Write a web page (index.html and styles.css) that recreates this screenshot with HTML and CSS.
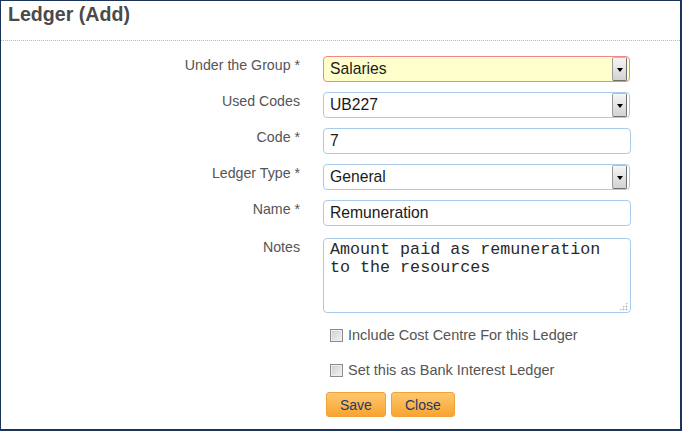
FILE: index.html
```html
<!DOCTYPE html>
<html>
<head>
<meta charset="utf-8">
<title>Ledger (Add)</title>
<link rel="stylesheet" href="styles.css">
</head>
<body>
<div class="frame">
  <header class="head">
    <h1 class="title">Ledger (Add)</h1>
  </header>
  <form class="form">
    <label class="lbl">Under the Group *</label>
    <div class="select invalid"><span class="val">Salaries</span><span class="arrow"></span></div>

    <label class="lbl">Used Codes</label>
    <div class="select"><span class="val">UB227</span><span class="arrow"></span></div>

    <label class="lbl">Code *</label>
    <div class="input"><span class="val">7</span></div>

    <label class="lbl">Ledger Type *</label>
    <div class="select"><span class="val">General</span><span class="arrow"></span></div>

    <label class="lbl">Name *</label>
    <div class="input"><span class="val">Remuneration</span></div>

    <label class="lbl notes-lbl">Notes</label>
    <div class="textarea"><span class="mono">Amount paid as remuneration<br>to the resources</span><span class="grip"></span></div>

    <div class="check first"><span class="box"></span><span>Include Cost Centre For this Ledger</span></div>
    <div class="check"><span class="box"></span><span>Set this as Bank Interest Ledger</span></div>

    <div class="buttons">
      <span class="btn">Save</span>
      <span class="btn">Close</span>
    </div>
  </form>
</div>
</body>
</html>
```

FILE: styles.css
```css
html, body {
  margin: 0;
  padding: 0;
  background: #fff;
}
.frame {
  width: 682px;
  height: 431px;
  box-sizing: border-box;
  border-style: solid;
  border-color: #1b3459;
  border-width: 1px 2px 2px 1px;
  font-family: "Liberation Sans", Arial, sans-serif;
  background: #fff;
}
.head {
  box-sizing: border-box;
  height: 40px;
  border-bottom: 1px dotted #b5b5b5;
}
.title {
  margin: 0;
  padding: 2px 0 0 7px;
  font-size: 19.6px;
  font-weight: bold;
  color: #4a4a4a;
  line-height: 22px;
}
.form {
  display: grid;
  grid-template-columns: 299px 308px;
  column-gap: 23px;
  row-gap: 10px;
  padding-top: 15px;
  margin: 0;
}
.lbl {
  text-align: right;
  font-size: 14.2px;
  line-height: 16px;
  padding-top: 1px;
  color: #555;
}
.select, .input, .textarea {
  box-sizing: border-box;
  border: 1px solid #a9cbea;
  border-radius: 4px;
  background: #fff;
  font-size: 15.7px;
  color: #1a1a1a;
}
.select {
  width: 307px;
  height: 26px;
  display: flex;
  align-items: center;
  padding-left: 6px;
}
.select.invalid {
  border-color: #f0868a;
  background: #ffffcc;
}
.input {
  height: 26px;
  display: flex;
  align-items: center;
  padding-left: 6px;
}
.val {
  flex: 1;
  line-height: 18px;
}
.arrow {
  width: 15px;
  height: 24px;
  box-sizing: border-box;
  margin-right: 2px;
  border: 1px solid #6f6f6f;
  border-top-color: #bdbdbd;
  border-left-color: #9a9a9a;
  border-radius: 2px;
  background: linear-gradient(#f6f6f6, #d2d2d2);
  display: flex;
  align-items: center;
  justify-content: center;
}
.arrow::after {
  content: "";
  width: 0;
  height: 0;
  border-left: 3.5px solid transparent;
  border-right: 3.5px solid transparent;
  border-top: 4px solid #000;
  margin-top: 1px;
}
.notes-lbl, .textarea {
  margin-top: 2px;
}
.textarea {
  height: 75px;
  padding: 2px 6px;
  display: flex;
  align-items: flex-start;
}
.mono {
  font-family: "Liberation Mono", "Courier New", monospace;
  font-size: 16.7px;
  line-height: 18px;
  color: #2a2a2a;
  flex: 1;
}
.grip {
  align-self: flex-end;
  width: 9px;
  height: 9px;
  margin: 0 -4px -1px 0;
  background:
    radial-gradient(circle, #bbb 0.9px, transparent 1.1px) 0 0 / 3px 3px;
  -webkit-mask: linear-gradient(135deg, transparent 45%, #000 46%);
  mask: linear-gradient(135deg, transparent 45%, #000 46%);
}
.check {
  grid-column: 2;
  height: 24px;
  display: flex;
  align-items: center;
  gap: 5px;
  padding-left: 7px;
  font-size: 14.5px;
  color: #555;
}
.check + .check {
  margin-top: 1px;
}
.box {
  width: 13px;
  height: 13px;
  box-sizing: border-box;
  border: 1px solid #8c8c8c;
  background: linear-gradient(135deg, #cfcfcf, #f2f2f2);
  box-shadow: inset 0 0 0 1px #eee;
}
.buttons {
  grid-column: 2;
  display: flex;
  gap: 5px;
  padding-left: 3px;
}
.btn {
  height: 25px;
  box-sizing: border-box;
  padding: 0 13px;
  display: flex;
  align-items: center;
  border: 1px solid #eea23a;
  border-radius: 3px;
  background: linear-gradient(#fdc86e, #f8a430);
  color: #1d3a6a;
  font-size: 14px;
}
```
